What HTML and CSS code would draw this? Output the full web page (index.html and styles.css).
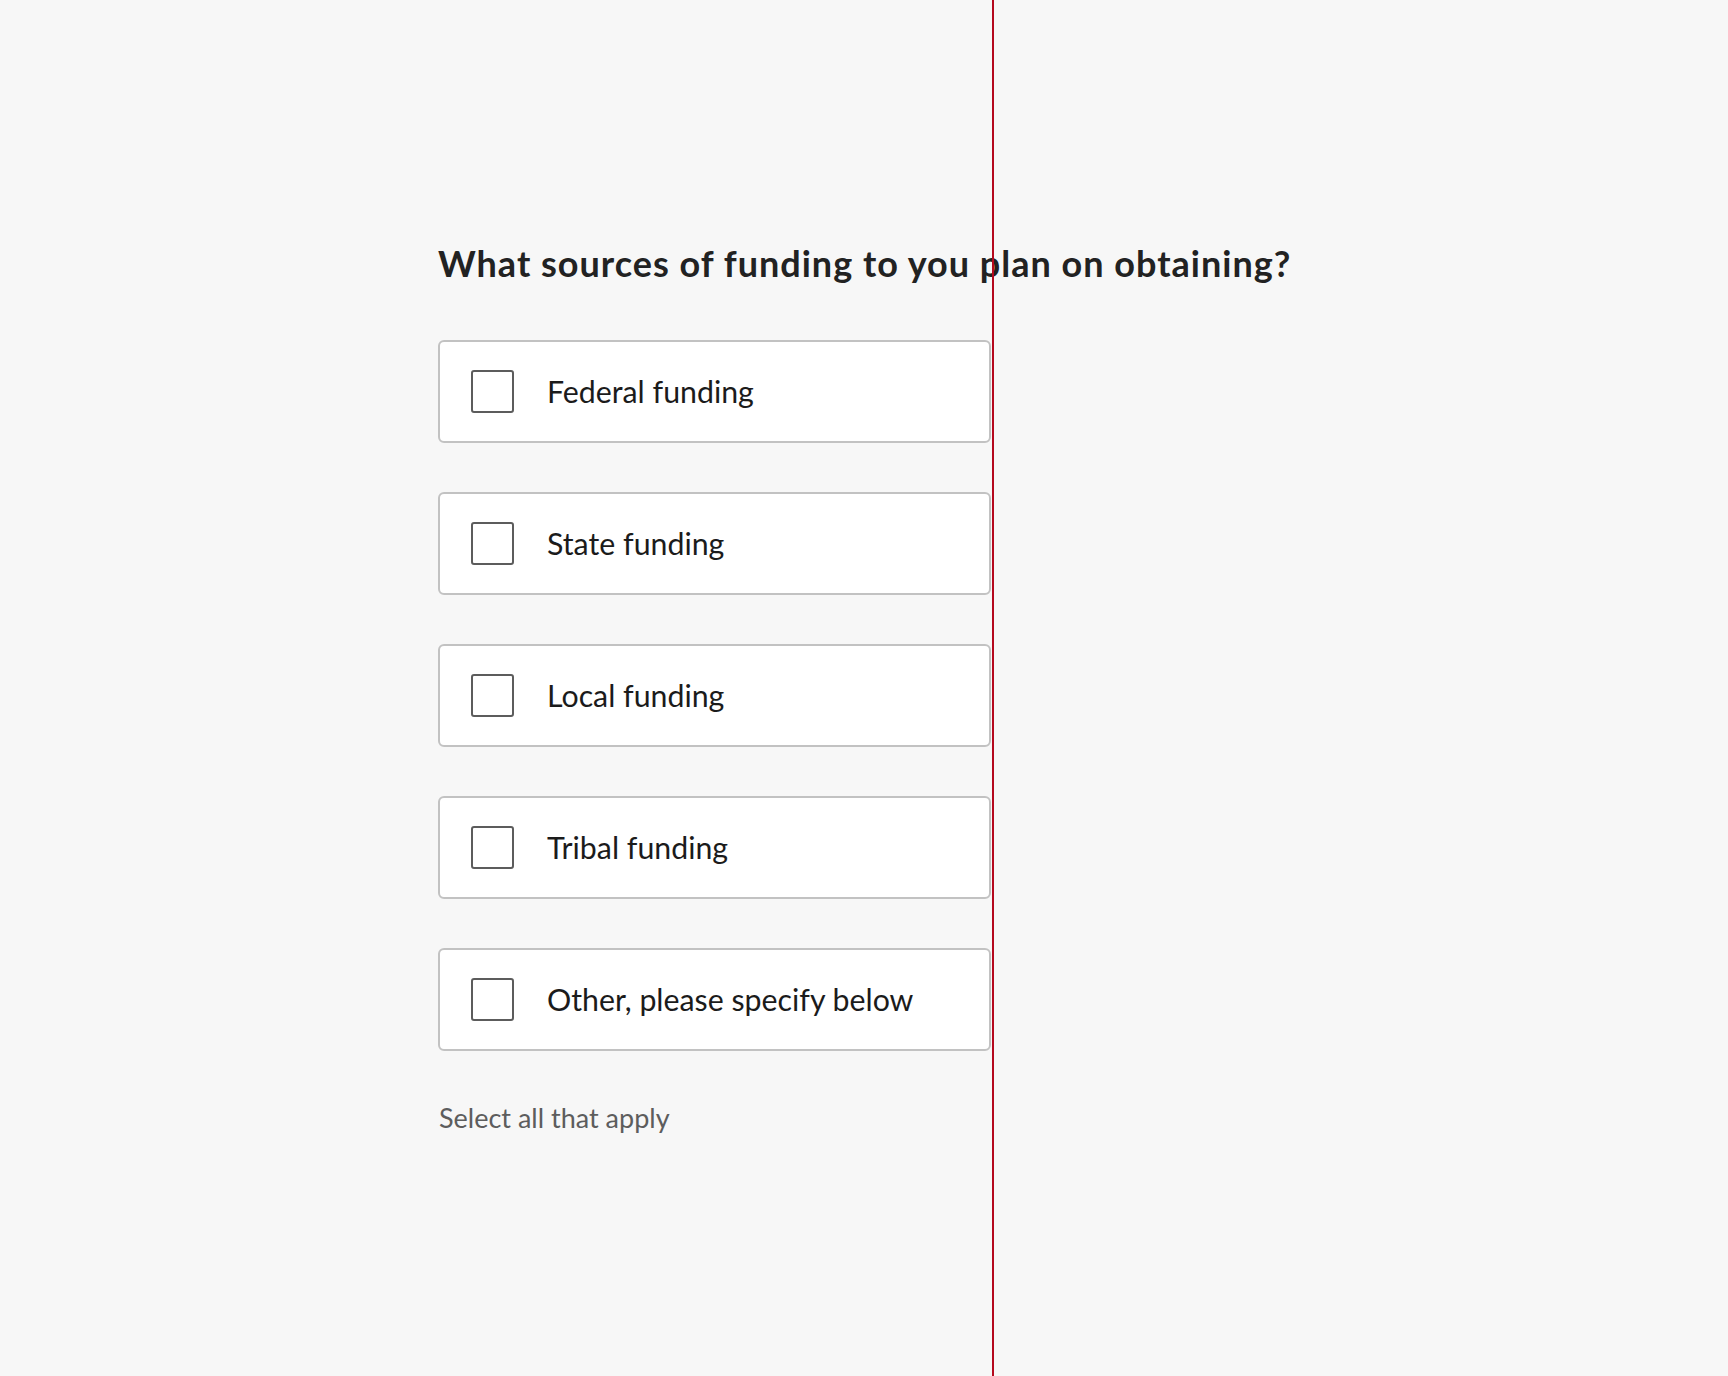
FILE: index.html
```html
<!DOCTYPE html>
<html lang="en">
<head>
<meta charset="utf-8">
<title>Funding sources</title>
<link rel="stylesheet" href="styles.css">
</head>
<body>
<main class="page">
  <form class="question">
    <h1 class="question-title">What sources of funding to you plan on obtaining?</h1>
    <div class="tiles">
      <label class="tile"><span class="box"></span><span class="tile-label">Federal funding</span></label>
      <label class="tile"><span class="box"></span><span class="tile-label">State funding</span></label>
      <label class="tile"><span class="box"></span><span class="tile-label">Local funding</span></label>
      <label class="tile"><span class="box"></span><span class="tile-label">Tribal funding</span></label>
      <label class="tile"><span class="box"></span><span class="tile-label">Other, please specify below</span></label>
    </div>
    <p class="hint">Select all that apply</p>
  </form>
</main>
<div class="guide"></div>
</body>
</html>
```

FILE: styles.css
```css
html, body {
  margin: 0;
  padding: 0;
  background: #f7f7f7;
}
body {
  font-family: Lato, "Source Sans Pro", "Noto Sans", sans-serif;
  color: #1b1b1b;
  min-height: 1376px;
}
.page {
  padding: 242px 0 0 438px;
}
.question {
  width: 553px;
}
.question-title {
  margin: 0 0 55px 0;
  font-size: 36px;
  line-height: 1.2;
  font-weight: 700;
  letter-spacing: 1px;
  white-space: nowrap;
  color: #222222;
}
.tiles {
  display: flex;
  flex-direction: column;
  gap: 49px;
}
.tile {
  box-sizing: border-box;
  height: 103px;
  display: flex;
  align-items: center;
  padding-left: 31px;
  background: #ffffff;
  border: 2px solid #c2c2c2;
  border-radius: 6px;
}
.box {
  box-sizing: border-box;
  width: 43px;
  height: 43px;
  border: 2px solid #5c5c5c;
  border-radius: 3px;
  background: #ffffff;
  flex: none;
}
.tile-label {
  margin-left: 33px;
  font-size: 30.3px;
  line-height: 1.2;
  color: #1b1b1b;
  padding-bottom: 2px;
}
.hint {
  margin: 51px 0 0 1px;
  font-size: 27px;
  line-height: 1.2;
  color: #5d5d5d;
}
.guide {
  position: absolute;
  top: 0;
  left: 992px;
  width: 2px;
  height: 1376px;
  background: #b5091e;
}
```
